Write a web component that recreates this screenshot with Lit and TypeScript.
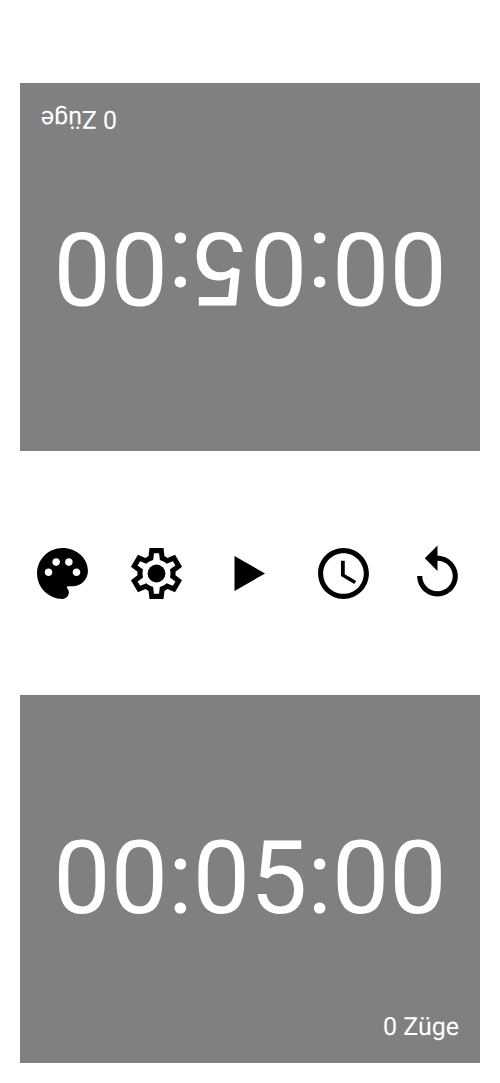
import { LitElement, html, css, svg } from "lit";
import { customElement, property, state } from "lit/decorators.js";

const icons = {
  palette: svg`<path d="M12 2C6.490 2 2 6.490 2 12s4.490 10 10 10c1.380 0 2.500-1.120 2.500-2.500 0-.61-.23-1.200-.64-1.670-.08-.1-.13-.21-.13-.33 0-.28.22-.5.5-.5H16c3.310 0 6-2.690 6-6 0-4.960-4.490-9-10-9zm5.500 11c-.83 0-1.500-.67-1.500-1.500s.67-1.500 1.500-1.500 1.500.67 1.500 1.500-.67 1.500-1.500 1.500zm-3-4c-.83 0-1.500-.67-1.500-1.500S13.670 6 14.500 6s1.500.67 1.500 1.500S15.330 9 14.500 9zM5 11.500c0-.83.67-1.500 1.500-1.500s1.500.67 1.500 1.500S7.330 13 6.500 13 5 12.330 5 11.500zm6-4c0 .83-.67 1.500-1.500 1.500S8 8.330 8 7.500 8.670 6 9.500 6s1.500.67 1.500 1.500z"/>`,
  settings: svg`<path fill-rule="evenodd" d="M9.250 22l-.4-3.200q-.325-.125-.612-.3-.288-.175-.563-.375L4.700 19.375l-2.750-4.750 2.575-1.950q-.025-.175-.025-.338v-.675q0-.162.025-.337L1.950 9.375l2.750-4.750 2.975 1.250q.275-.2.575-.375.3-.175.600-.300L9.250 2h5.500l.4 3.200q.325.125.612.3.288.175.563.375l2.975-1.250 2.750 4.750-2.575 1.950q.025.175.025.337v.675q0 .163-.05.338l2.575 1.950-2.750 4.750-2.950-1.250q-.275.2-.575.375-.3.175-.600.300l-.4 3.200zM11 20h1.975l.350-2.650q.775-.2 1.438-.587.662-.388 1.212-.938l2.475 1.025.975-1.700-2.150-1.625q.125-.35.175-.737.050-.388.050-.788t-.05-.787q-.05-.388-.175-.738l2.150-1.625-.975-1.700-2.475 1.050q-.55-.575-1.212-.963-.663-.387-1.438-.587L13 4h-1.975l-.350 2.650q-.775.2-1.437.587-.663.388-1.213.938L5.550 7.150l-.975 1.700 2.150 1.600q-.125.375-.175.750-.050.375-.050.800 0 .4.050.775t.175.750l-2.150 1.625.975 1.700 2.475-1.050q.55.575 1.213.963.662.387 1.437.587z"/><circle cx="12" cy="12" r="3.500"/>`,
  play: svg`<path d="M6.100 5.100v13.800L18.100 12z"/>`,
  clock: svg`<path d="M11.990 2C6.470 2 2 6.480 2 12s4.470 10 9.990 10C17.520 22 22 17.520 22 12S17.520 2 11.990 2zM12 20c-4.420 0-8-3.580-8-8s3.580-8 8-8 8 3.580 8 8-3.580 8-8 8zm.5-13H11v6l5.250 3.150.75-1.230-4.500-2.670z"/>`,
  replay: svg`<path d="M12 5V1L7 6l5 5V7c3.310 0 6 2.690 6 6s-2.690 6-6 6-6-2.690-6-6H4c0 4.420 3.580 8 8 8s8-3.580 8-8-3.580-8-8-8z"/>`,
};

type IconName = keyof typeof icons;

const actions: { icon: IconName; label: string }[] = [
  { icon: "palette", label: "Farben" },
  { icon: "settings", label: "Einstellungen" },
  { icon: "play", label: "Start" },
  { icon: "clock", label: "Bedenkzeit" },
  { icon: "replay", label: "Zurücksetzen" },
];

/** One player's half of the chess clock. */
@customElement("player-clock")
class PlayerClock extends LitElement {
  @property() time = "";
  @property({ type: Number }) moves = 0;

  static styles = css`
    :host {
      display: flex;
      min-width: 0;
    }
    .panel {
      flex: 1;
      min-width: 0;
      display: grid;
      grid-template-rows: 1fr auto 1fr;
      margin: 20px;
      padding: 19px 21px 21px;
      border: 0;
      background: #808080;
      color: #fff;
      font-family: Roboto, sans-serif;
      text-rendering: geometricPrecision;
      cursor: pointer;
    }
    .time {
      grid-row: 2;
      justify-self: center;
      font-size: 102px;
      line-height: 120px;
      white-space: nowrap;
    }
    .moves {
      grid-row: 3;
      place-self: end;
      font-size: 25px;
      line-height: 28px;
    }
  `;

  render() {
    return html`
      <button class="panel" type="button">
        <span class="time">${this.time}</span>
        <span class="moves">${this.moves} Züge</span>
      </button>
    `;
  }
}

@customElement("app-root")
class AppRoot extends LitElement {
  @state() private time = "00:05:00";

  static styles = css`
    :host {
      display: flex;
      flex-direction: column;
      box-sizing: border-box;
      min-height: 100vh;
      padding-top: 63px;
      background: #fff;
    }
    .player {
      flex: 2 1 0;
    }
    .opponent {
      transform: rotate(180deg);
    }
    .toolbar {
      flex: 1 1 0;
      display: grid;
      grid-template-columns: repeat(5, 1fr);
      place-items: center;
      padding: 0 16px;
    }
    .action {
      display: flex;
      padding: 0;
      border: 0;
      background: none;
      color: #000;
      cursor: pointer;
    }
    .icon {
      width: 61px;
      height: 61px;
      fill: currentColor;
    }
  `;

  render() {
    return html`
      <player-clock class="player opponent" .time=${this.time}></player-clock>
      <nav class="toolbar">
        ${actions.map(
          ({ icon, label }) => html`
            <button class="action" type="button" aria-label=${label}>
              <svg class="icon" viewBox="0 0 24 24" aria-hidden="true">${icons[icon]}</svg>
            </button>
          `
        )}
      </nav>
      <player-clock class="player" .time=${this.time}></player-clock>
    `;
  }
}
